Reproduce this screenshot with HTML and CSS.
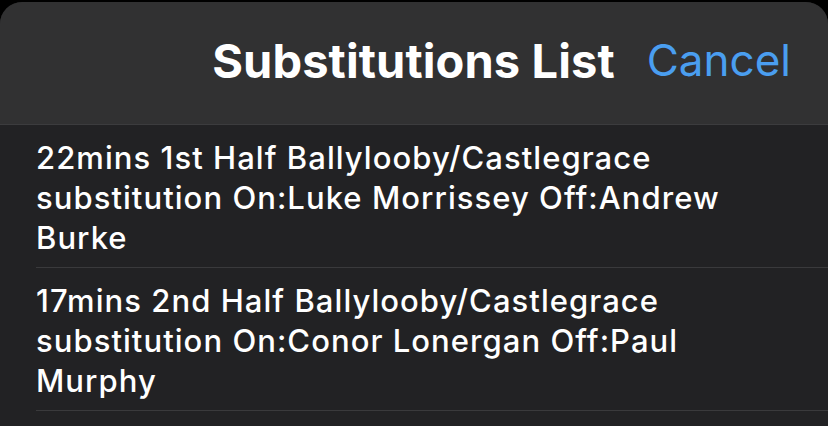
FILE: index.html
```html
<!DOCTYPE html>
<html lang="en">
<head>
    <meta charset="UTF-8">
    <meta name="viewport" content="width=device-width, initial-scale=1.0">
    <title>Substitutions List</title>
    <link rel="stylesheet" href="styles.css">
</head>
<body>

    <div class="sheet">
        <div class="sheet-header">
            <span></span>
            <h2 class="sheet-title">Substitutions List</h2>
            <button class="cancel-btn">Cancel</button>
        </div>

        <ul class="sub-list">
            <li class="sub-item">22mins 1st Half Ballylooby/Castlegrace substitution On:Luke Morrissey Off:Andrew Burke</li>
            <li class="sub-item">17mins 2nd Half Ballylooby/Castlegrace substitution On:Conor Lonergan Off:Paul Murphy</li>
        </ul>
    </div>

</body>
</html>
```

FILE: styles.css
```css
html, body {
    height: 100%;
}
body {
    margin: 0;
    padding-top: 2px;
    background: #000;
    font-family: Inter, "Liberation Sans", sans-serif;
    color: #fff;
    box-sizing: border-box;
    overflow: hidden;
}
.sheet {
    height: 100%;
    background: #222224;
    border-radius: 22px 22px 0 0;
    overflow: hidden;
}
.sheet-header {
    display: grid;
    grid-template-columns: 1fr auto 1fr;
    align-items: center;
    height: 123px;
    padding: 0 37px 0 36px;
    background: #313132;
    border-bottom: 1px solid #3c3c3e;
    box-sizing: border-box;
}
.sheet-title {
    margin: 0 0 6px;
    font-size: 47px;
    font-weight: 700;
    letter-spacing: 0.1px;
}
.cancel-btn {
    justify-self: end;
    margin-bottom: 6px;
    background: none;
    border: none;
    padding: 0;
    font-family: inherit;
    font-size: 44px;
    color: #4a9ef0;
    cursor: pointer;
}
.sub-list {
    list-style: none;
    margin: 0;
    padding: 0 0 0 36px;
}
.sub-item {
    padding: 13px 36px 9px 0;
    font-size: 31px;
    font-weight: 500;
    letter-spacing: 1.05px;
    line-height: 40px;
    border-bottom: 1px solid #3a3a3c;
}
```
